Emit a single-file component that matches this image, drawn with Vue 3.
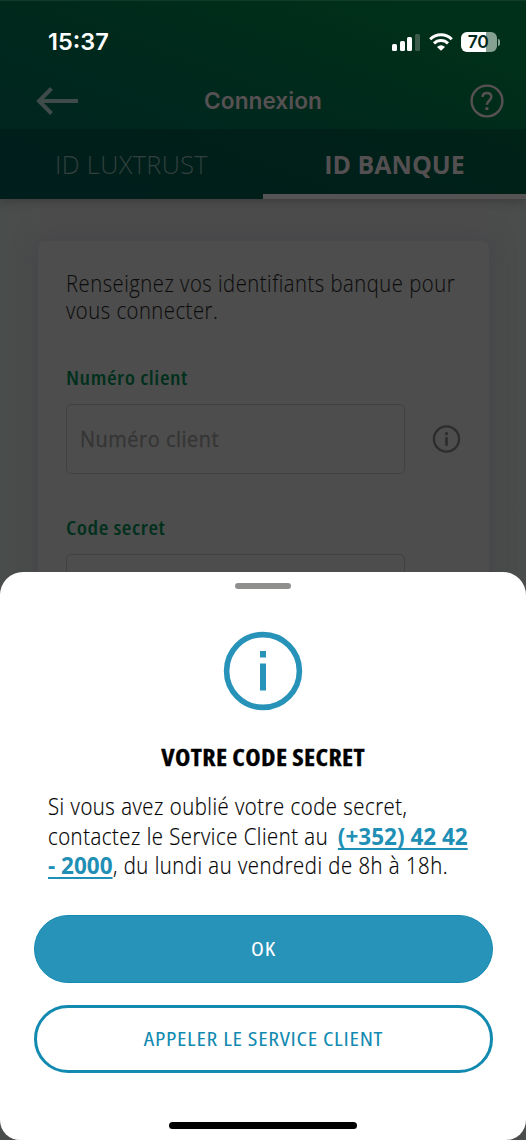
<script setup>
const bars = [7, 10, 14, 17]
</script>

<template>
  <div class="phone">
    <header class="top">
      <div class="status">
        <span class="time">15:37</span>
        <div class="indicators">
          <div class="signal">
            <i v-for="(h, n) in bars" :key="n" :class="{ off: n === 3 }" :style="{ height: h + 'px' }"></i>
          </div>
          <svg class="wifi" width="24" height="18" viewBox="0 0 24 18" fill="none" stroke="#fff" stroke-width="3">
            <path d="M1.2 6.2 A15.3 15.3 0 0 1 22.8 6.2" />
            <path d="M5 10.4 A9.9 9.9 0 0 1 19 10.4" />
            <path d="M12 17.8 L8 13.9 A5.8 5.8 0 0 1 16 13.9 Z" fill="#fff" stroke="none" />
          </svg>
          <div class="battery"><span>70</span></div>
          <i class="cap"></i>
        </div>
      </div>
      <div class="bar">
        <svg width="43" height="28" viewBox="0 0 43 28" fill="none" stroke="#3e4b48" stroke-width="4">
          <path d="M15.5 1.5 L3 14 L15.5 26.5 M2.5 14 H42" />
        </svg>
        <h1>Connexion</h1>
        <svg width="34" height="34" viewBox="0 0 34 34" fill="none" stroke="#575153" stroke-width="2.4">
          <circle cx="17" cy="17" r="15.4" />
          <path d="M12.6 13 C12.6 10.4 14.4 9 17 9 C19.6 9 21.3 10.6 21.3 13 C21.3 16.6 16.9 16.7 16.9 20.8" stroke-width="2.5" />
          <path d="M16.9 23.2 V26" stroke-width="3" />
        </svg>
      </div>
      <nav class="tabs">
        <div class="tab"><span>ID LUXTRUST</span></div>
        <div class="tab active"><span>ID BANQUE</span></div>
      </nav>
    </header>

    <main class="card">
      <p class="intro">Renseignez vos identifiants banque pour<br>vous connecter.</p>
      <label class="label a">Numéro client</label>
      <div class="row">
        <div class="field"><span>Numéro client</span></div>
        <svg width="30" height="30" viewBox="0 0 30 30" fill="none" stroke="#2d2d2d" stroke-width="2.4">
          <circle cx="15" cy="15" r="13" />
          <path d="M15 8 V11 M15 13.2 V22" stroke-width="2.8" />
        </svg>
      </div>
      <label class="label b">Code secret</label>
      <div class="field"></div>
    </main>

    <section class="sheet">
      <i class="handle"></i>
      <svg class="info" width="80" height="80" viewBox="0 0 80 80" fill="none" stroke="#2793b9" stroke-width="5.6">
        <circle cx="40" cy="40" r="36.4" />
        <path d="M40 20 V26.4 M40 32.6 V59.6" stroke-width="6" />
      </svg>
      <h2>VOTRE CODE SECRET</h2>
      <p class="msg">
        <span>Si vous avez oublié votre code secret,</span><br>
        <span class="lead">contactez le Service Client au</span> <a>(+352) 42 42</a><br>
        <a>- 2000</a><span>, du lundi au vendredi de 8h à 18h.</span>
      </p>
      <button class="btn primary"><span>OK</span></button>
      <button class="btn outline"><span>APPELER LE SERVICE CLIENT</span></button>
      <i class="home"></i>
    </section>
  </div>
</template>

<style>
body { margin: 0; background: #4c4c4c; }
</style>

<style scoped>
* { box-sizing: border-box; }
.phone {
  position: relative; width: 526px; height: 1140px; overflow: hidden;
  background: linear-gradient(90deg, #494d4b, #4c4c4c 9%, #4c4c4c 91%, #494d4b);
  font-family: "Open Sans", "Noto Sans", sans-serif;
}
.top {
  height: 199px; background: linear-gradient(20deg, #002520 12%, #00291c 52%, #003019 88%);
  box-shadow: 0 2px 9px rgba(30, 30, 35, .35); border-top: 1px solid #123a2a;
}
.status { height: 72px; display: flex; justify-content: space-between; padding: 27px 26px 0 48px; }
.time { font: 600 23.5px/28px Inter, sans-serif; color: #fff; }
.indicators { display: flex; height: 28px; align-items: center; }
.signal { display: flex; align-items: flex-end; gap: 2.6px; height: 18px; margin-right: 9px; }
.signal i { width: 5px; border-radius: 1.5px; background: #fff; }
.signal .off { background: #3c5b4a; }
.wifi { margin-right: 8px; }
.battery {
  width: 36px; height: 20px; border-radius: 6px; padding-right: 2px; text-align: center;
  background: linear-gradient(90deg, #fff 70%, #86a091 70%);
  font: 600 17.5px/20px Inter, sans-serif; letter-spacing: -.4px; color: #00291c;
}
.cap { width: 2px; height: 7px; margin-left: 1px; border-radius: 0 2px 2px 0; background: #86a091; }
.bar { height: 56px; display: grid; grid-template-columns: 43px 1fr 34px; align-items: center; padding: 0 22px 1px 36px; }
.bar h1 { margin: 0; padding-right: 23px; text-align: center; font: 600 22.7px/28px Inter, sans-serif; color: #575153; }
.tabs { display: flex; height: 70px; background: rgba(0, 18, 18, .34); }
.tab { flex: 1; text-align: center; font-size: 25.3px; font-weight: 300; letter-spacing: .35px; line-height: 71px; color: #32413e; white-space: nowrap; }
.tab.active { font-size: 25px; letter-spacing: 0; font-weight: 700; color: #545052; border-bottom: 5.5px solid #555354; }
.card {
  width: 451px; height: 420px; margin: 42px 0 0 38px; padding: 29px 28px 0; border-radius: 7px;
  background: #4d4d4d; box-shadow: 0 0 24px rgba(62, 62, 72, .55);
}
.intro { margin: 0 0 40px; font-size: 23px; font-weight: 300; letter-spacing: .6px; line-height: 27px; color: #0c0c0c; white-space: nowrap; transform: scaleX(.879); transform-origin: 0 0; -webkit-text-stroke: .1px; }
.label { display: block; height: 27px; font-size: 19.5px; font-stretch: 75%; letter-spacing: .5px; line-height: 27px; font-weight: 600; color: #00301c; white-space: nowrap; transform: scaleX(1.13); transform-origin: 0 0; }
.label.a { margin-bottom: 13px; }
.label.b { margin: 40px 0 13px; }
.row { display: flex; align-items: center; gap: 27px; }
.field {
  width: 339px; height: 70px; padding-left: 13px; border: 1px solid #414141; border-radius: 5px; flex: none;
  font-size: 22px; font-weight: 500; letter-spacing: .6px; line-height: 66px; color: #353535; white-space: nowrap;
}
.field span { display: inline-block; transform: scaleX(.905); transform-origin: 0 0; -webkit-text-stroke: .3px; }
.sheet {
  position: absolute; left: 0; right: 0; top: 572px; bottom: 0; border-radius: 23px 23px 20px 20px; background: #fff;
  display: flex; flex-direction: column; align-items: center;
}
.handle { width: 56px; height: 6px; margin-top: 11px; border-radius: 3px; background: #8f8f8e; flex: none; }
.info { margin-top: 42px; margin-bottom: 31px; flex: none; }
h2 { margin: 0; font-size: 22.5px; font-stretch: 75%; letter-spacing: .3px; line-height: 32px; font-weight: 700; color: #000; white-space: nowrap; transform: scaleX(1.155); -webkit-text-stroke: .3px; }
.msg { width: 430px; height: 90px; margin: 18px 0 33px; font-size: 23px; font-weight: 300; letter-spacing: .6px; line-height: 29.5px; color: #000; white-space: nowrap; }
.msg span { display: inline-block; transform: scaleX(.883); transform-origin: 0 0; -webkit-text-stroke: .2px; }
.msg .lead { margin-right: -34px; }
.msg a { font-weight: 700; font-size: 22.5px; letter-spacing: 0; color: #1f8fb5; text-decoration: underline; text-decoration-thickness: 1.5px; text-underline-offset: 3px; text-decoration-skip-ink: none; }
.btn {
  flex: none; width: 459px; height: 68px; margin-bottom: 22px; border: 3px solid #128ab0; border-radius: 34px; padding: 0;
  background: #fff; font-family: inherit; font-stretch: 75%; font-size: 20px; letter-spacing: .6px; font-weight: 500; color: #128ab0; line-height: 60px; white-space: nowrap;
}
.btn span { display: inline-block; transform: scaleX(1.18); }
.primary { background: #2893b9; border: 1px solid #168bb2; color: #fff; }
.home { width: 188px; height: 7px; margin-top: 27px; border-radius: 4px; background: #000; flex: none; }
</style>
